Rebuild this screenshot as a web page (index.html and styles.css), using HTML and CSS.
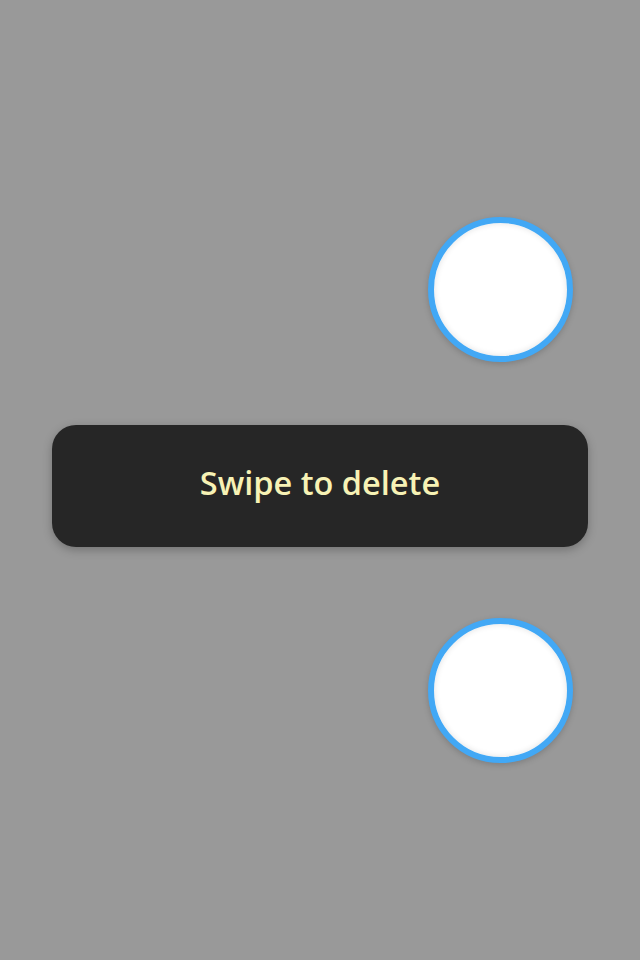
FILE: index.html
```html
<!DOCTYPE html>
<html>
<head>
<meta charset="utf-8">
<link rel="stylesheet" href="styles.css">
</head>
<body>
<main class="screen">
  <div class="knob"></div>
  <div class="toast">Swipe to delete</div>
  <div class="knob knob-bottom"></div>
</main>
</body>
</html>
```
FILE: styles.css
```css
html, body {
  margin: 0;
  padding: 0;
  background: #999999;
}
.screen {
  width: 640px;
  height: 960px;
  display: flex;
  flex-direction: column;
  padding-top: 217px;
  box-sizing: border-box;
}
.knob {
  width: 145px;
  height: 145px;
  box-sizing: border-box;
  border-radius: 50%;
  border: 6px solid #42a8f5;
  background: #ffffff;
  margin-left: 428px;
  box-shadow: 0 2px 6px rgba(0,0,0,0.18), inset 0 0 6px rgba(0,0,0,0.12);
}
.knob-bottom {
  margin-top: 71px;
}
.toast {
  margin: 63px 52px 0 52px;
  height: 122px;
  box-sizing: border-box;
  padding-bottom: 7px;
  border-radius: 24px;
  background: #262626;
  color: #f7f2b5;
  font-family: "Open Sans", "Noto Sans", sans-serif;
  font-weight: 600;
  font-size: 32.5px;
  display: flex;
  align-items: center;
  justify-content: center;
  box-shadow: 0 3px 10px rgba(0,0,0,0.25);
}
```
